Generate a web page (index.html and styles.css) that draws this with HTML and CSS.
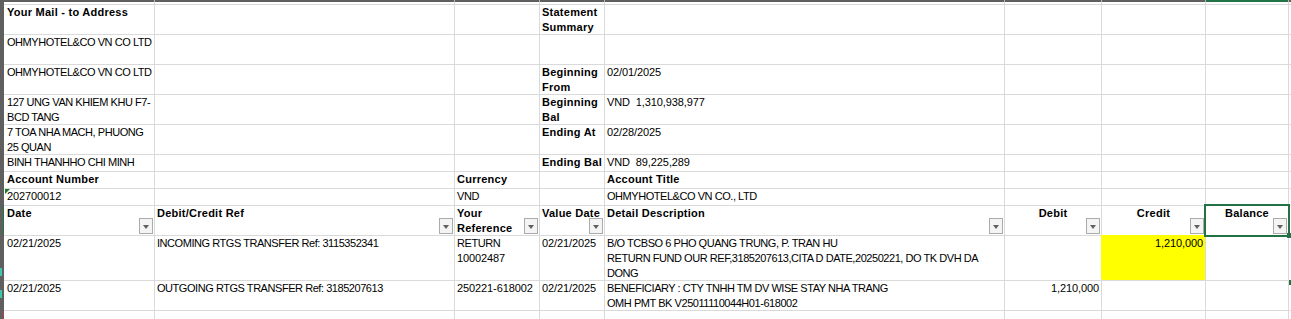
FILE: index.html
```html
<!DOCTYPE html>
<html>
<head>
<meta charset="utf-8">
<link rel="stylesheet" href="styles.css">
</head>
<body>
<div class="sheet">
  <div class="colhead">
    <span></span><span></span><span></span><span></span><span></span><span></span><span></span><span class="on"></span><span></span>
  </div>
  <div class="main">
    <div class="rowhead">
      <span class="rh-sel"></span>
      <span class="mk mk1"></span>
      <span class="mk mk2"></span>
      <span class="mk mk3"></span>
    </div>
    <div class="grid">
      <!-- r0 -->
      <div class="c"></div><div class="c"></div><div class="c"></div><div class="c"></div><div class="c"></div><div class="c"></div><div class="c"></div><div class="c"></div><div class="c"></div>
      <!-- r1 -->
      <div class="c b">Your Mail - to Address</div><div class="c"></div><div class="c"></div><div class="c b">Statement<br>Summary</div><div class="c"></div><div class="c"></div><div class="c"></div><div class="c"></div><div class="c"></div>
      <!-- r2 -->
      <div class="c">OHMYHOTEL&amp;CO VN CO LTD</div><div class="c"></div><div class="c"></div><div class="c"></div><div class="c"></div><div class="c"></div><div class="c"></div><div class="c"></div><div class="c"></div>
      <!-- r3 -->
      <div class="c">OHMYHOTEL&amp;CO VN CO LTD</div><div class="c"></div><div class="c"></div><div class="c b">Beginning<br>From</div><div class="c n">02/01/2025</div><div class="c"></div><div class="c"></div><div class="c"></div><div class="c"></div>
      <!-- r4 -->
      <div class="c">127 UNG VAN KHIEM KHU F7-<br>BCD TANG</div><div class="c"></div><div class="c"></div><div class="c b">Beginning<br>Bal</div><div class="c n">VND&nbsp; 1,310,938,977</div><div class="c"></div><div class="c"></div><div class="c"></div><div class="c"></div>
      <!-- r5 -->
      <div class="c">7 TOA NHA MACH, PHUONG<br>25 QUAN</div><div class="c"></div><div class="c"></div><div class="c b">Ending At</div><div class="c n">02/28/2025</div><div class="c"></div><div class="c"></div><div class="c"></div><div class="c"></div>
      <!-- r6 -->
      <div class="c">BINH THANHHO CHI MINH</div><div class="c"></div><div class="c"></div><div class="c b">Ending Bal</div><div class="c n">VND&nbsp; 89,225,289</div><div class="c"></div><div class="c"></div><div class="c"></div><div class="c"></div>
      <!-- r7 -->
      <div class="c b">Account Number</div><div class="c"></div><div class="c b">Currency</div><div class="c"></div><div class="c b">Account Title</div><div class="c"></div><div class="c"></div><div class="c"></div><div class="c"></div>
      <!-- r8 -->
      <div class="c n tri">202700012</div><div class="c"></div><div class="c">VND</div><div class="c"></div><div class="c">OHMYHOTEL&amp;CO VN CO., LTD</div><div class="c"></div><div class="c"></div><div class="c"></div><div class="c"></div>
      <!-- r9 header -->
      <div class="c b hd">Date<span class="fb"></span></div>
      <div class="c b hd">Debit/Credit Ref<span class="fb"></span></div>
      <div class="c b hd">Your<br>Reference<span class="fb"></span></div>
      <div class="c b hd">Value Date<span class="fb"></span></div>
      <div class="c b hd">Detail Description<span class="fb"></span></div>
      <div class="c b hd ctr">Debit<span class="fb"></span></div>
      <div class="c b hd ctr">Credit<span class="fb"></span></div>
      <div class="c b hd ctr sel">Balance<span class="fb"></span></div>
      <div class="c"></div>
      <!-- r10 -->
      <div class="c n">02/21/2025</div>
      <div class="c">INCOMING RTGS TRANSFER Ref: 3115352341</div>
      <div class="c">RETURN<br><span class="n">10002487</span></div>
      <div class="c n">02/21/2025</div>
      <div class="c">B/O TCBSO 6 PHO QUANG TRUNG, P. TRAN HU<br>RETURN FUND OUR REF,3185207613,CITA D DATE,20250221, DO TK DVH DA<br>DONG</div>
      <div class="c"></div>
      <div class="c n r y">1,210,000</div>
      <div class="c"></div>
      <div class="c"></div>
      <!-- r11 -->
      <div class="c n">02/21/2025</div>
      <div class="c">OUTGOING RTGS TRANSFER Ref: 3185207613</div>
      <div class="c n">250221-618002</div>
      <div class="c n">02/21/2025</div>
      <div class="c">BENEFICIARY : CTY TNHH TM DV WISE STAY NHA TRANG<br>OMH PMT BK V25011110044H01-618002</div>
      <div class="c n r">1,210,000</div>
      <div class="c"></div>
      <div class="c"></div>
      <div class="c mark"></div>
      <!-- r12 -->
      <div class="c"></div><div class="c"></div><div class="c"></div><div class="c"></div><div class="c"></div><div class="c"></div><div class="c"></div><div class="c"></div><div class="c"></div>
    </div>
  </div>
</div>
</body>
</html>
```

FILE: styles.css
```css
html, body {
  margin: 0;
  padding: 0;
  background: #ffffff;
}

body {
  font-family: "Liberation Sans", Arial, sans-serif;
  font-size: 11px;
  color: #000000;
  width: 1291px;
  height: 319px;
  overflow: hidden;
}

.sheet {
  display: flex;
  flex-direction: column;
}

.colhead {
  display: grid;
  grid-template-columns: 154px 299px 84px 64px 399px 96px 103px 82px 2px;
  column-gap: 1px;
  height: 2px;
  background: #b9b9b9;
}

.colhead span {
  background: #5f5f5f;
}

.colhead span.on {
  background: #217346;
}

.main {
  display: flex;
}

.rowhead {
  width: 4px;
  flex: none;
  background: #5f5f5f;
  position: relative;
}

.rh-sel {
  position: absolute;
  left: 3px;
  top: 203px;
  width: 1px;
  height: 30px;
  background: #217346;
}

.mk {
  position: absolute;
  left: 0;
  width: 2px;
  background: #3fc6a8;
}

.mk1 { top: 266px; height: 8px; }
.mk2 { top: 288px; height: 8px; }
.mk3 { top: 308px; height: 9px; left: 2px; width: 1px; background: #b04040; }

.grid {
  display: grid;
  grid-template-columns: 150px 299px 84px 64px 399px 96px 103px 82px 2px;
  grid-template-rows: 2px 29px 29px 29px 29px 29px 16px 16px 16px 29px 44px 29px 8px;
  gap: 1px;
  background: #dadada;
}

.c {
  background: #ffffff;
  padding: 0 2px;
  line-height: 15px;
  white-space: nowrap;
  letter-spacing: -0.45px;
  min-width: 0;
}

.grid > .c:nth-child(9n+1) {
  padding-left: 3px;
}

.b {
  font-weight: bold;
  letter-spacing: 0.25px;
}

.n {
  letter-spacing: -0.1px;
}

.r {
  text-align: right;
}

.ctr {
  text-align: center;
}

.y {
  background: #ffff00;
  box-shadow: -1px -1px 0 0 #ffff00;
}

.hd {
  position: relative;
}

.fb {
  position: absolute;
  right: 1px;
  bottom: 1px;
  width: 14px;
  height: 16px;
  box-sizing: border-box;
  border: 1px solid #ababab;
  background: #f4f4f4;
}

.fb::after {
  content: "";
  position: absolute;
  left: 3px;
  top: 6px;
  width: 0;
  height: 0;
  border-left: 3.5px solid transparent;
  border-right: 3.5px solid transparent;
  border-top: 4px solid #606060;
}

.sel::before {
  content: "";
  position: absolute;
  left: -2px;
  top: -2px;
  right: -2px;
  bottom: -2px;
  border: 2px solid #217346;
  pointer-events: none;
}

.sel::after {
  content: "";
  position: absolute;
  right: -4px;
  bottom: -3px;
  width: 5px;
  height: 5px;
  background: #217346;
  z-index: 1;
}

.tri {
  position: relative;
}

.tri::before {
  content: "";
  position: absolute;
  left: 1px;
  top: 0;
  width: 0;
  height: 0;
  border-top: 5px solid #1a7a2e;
  border-right: 5px solid transparent;
}

.mark {
  position: relative;
}

.mark::before {
  content: "";
  position: absolute;
  left: 0;
  top: -1px;
  width: 2px;
  height: 5px;
  background: #217346;
}
```
